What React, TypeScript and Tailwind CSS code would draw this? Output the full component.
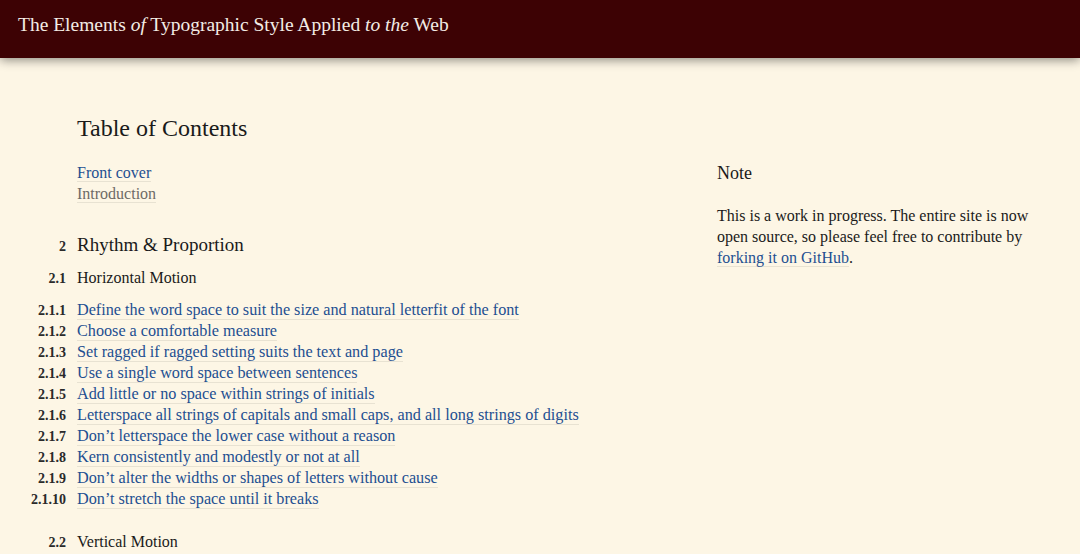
const serif = "font-['Liberation_Serif','Times_New_Roman',serif]";

const items = [
  ["2.1.1", "Define the word space to suit the size and natural letterfit of the font"],
  ["2.1.2", "Choose a comfortable measure"],
  ["2.1.3", "Set ragged if ragged setting suits the text and page"],
  ["2.1.4", "Use a single word space between sentences"],
  ["2.1.5", "Add little or no space within strings of initials"],
  ["2.1.6", "Letterspace all strings of capitals and small caps, and all long strings of digits"],
  ["2.1.7", "Don\u2019t letterspace the lower case without a reason"],
  ["2.1.8", "Kern consistently and modestly or not at all"],
  ["2.1.9", "Don\u2019t alter the widths or shapes of letters without cause"],
  ["2.1.10", "Don\u2019t stretch the space until it breaks"],
];

function TocLink({ children }: { children: React.ReactNode }) {
  return (
    <a href="#" className="text-[#1d4f91] border-b border-[#e8e2d2]">
      {children}
    </a>
  );
}

function Num({ children }: { children: React.ReactNode }) {
  return (
    <span className="text-right text-[14px] font-bold text-[#2a2a2a] pr-[11px]">{children}</span>
  );
}

export default function App() {
  return (
    <div className={`${serif} min-h-[554px] bg-[#fdf6e5] text-[#1a1a1a] overflow-hidden`}>
      {/* Header */}
      <header className="relative z-10 h-[58px] bg-[#3d0204] shadow-[0_2px_10px_rgba(0,0,0,0.45)] px-[18px] pt-[12px]">
        <h1 className="text-[#f3ece4] text-[19.5px] leading-[26px]">
          The Elements <em>of</em> Typographic Style Applied <em>to the</em> Web
        </h1>
      </header>

      <main className="flex pt-[55px]">
        {/* Table of contents */}
        <section className="w-[717px] shrink-0">
          <h2 className="pl-[77px] text-[24px] leading-[30px]">Table of Contents</h2>

          <ul className="pl-[77px] mt-[19px] text-[16px] leading-[21px]">
            <li>
              <TocLink>Front cover</TocLink>
            </li>
            <li>
              <span className="text-[#6d6a66] border-b border-[#e8e2d2]">Introduction</span>
            </li>
          </ul>

          <div className="grid grid-cols-[77px_1fr] items-baseline mt-[28px]">
            <Num>2</Num>
            <h3 className="text-[19px] leading-[26px]">Rhythm &amp; Proportion</h3>
          </div>

          <div className="grid grid-cols-[77px_1fr] items-baseline mt-[9px] h-[21px] leading-[21px]">
            <Num>2.1</Num>
            <h4 className="text-[16px]">Horizontal Motion</h4>
          </div>

          <ol className="mt-[12px] text-[16.2px] leading-[21px]">
            {items.map(([n, t]) => (
              <li key={n} className="grid grid-cols-[77px_1fr] items-baseline h-[21px]">
                <Num>{n}</Num>
                <span>
                  <TocLink>{t}</TocLink>
                </span>
              </li>
            ))}
          </ol>

          <div className="grid grid-cols-[77px_1fr] items-baseline mt-[21px] h-[21px] leading-[21px]">
            <Num>2.2</Num>
            <h4 className="text-[16px]">Vertical Motion</h4>
          </div>
        </section>

        {/* Note */}
        <aside className="w-[330px] pt-[49px]">
          <h2 className="text-[18px] leading-[22px]">Note</h2>
          <p className="mt-[21px] text-[16px] leading-[21px]">
            This is a work in progress. The entire site is now open source, so please feel free to
            contribute by <TocLink>forking it on GitHub</TocLink>.
          </p>
        </aside>
      </main>
    </div>
  );
}
